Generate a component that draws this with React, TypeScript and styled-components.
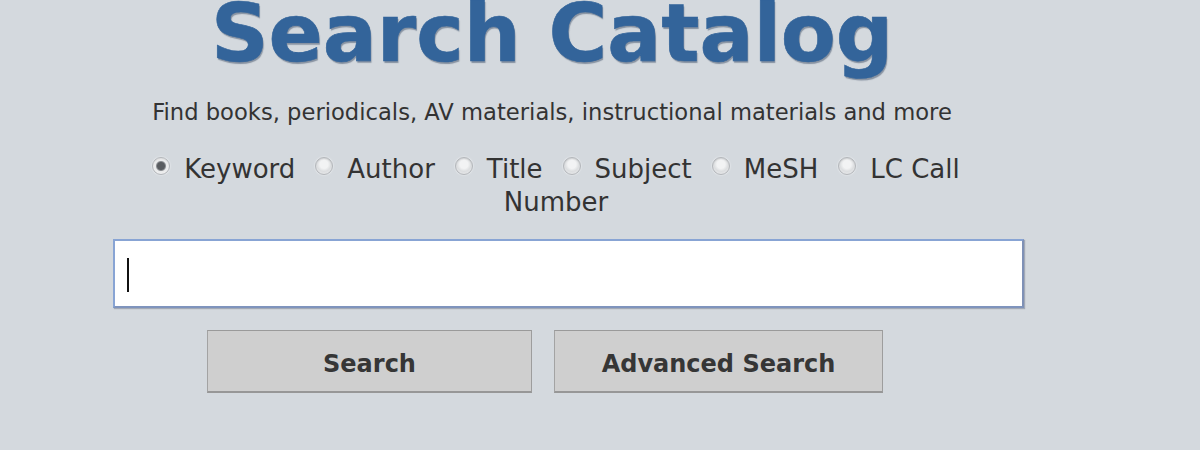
import styled, { createGlobalStyle } from "styled-components";

const GlobalStyle = createGlobalStyle`
  html, body {
    margin: 0;
    padding: 0;
    background: #d4d9de;
  }
  body {
    font-family: "DejaVu Sans", Verdana, sans-serif;
    color: #333;
    overflow: hidden;
  }
`;

const options = ["Keyword", "Author", "Title", "Subject", "MeSH", "LC Call Number"];

const App = () => {
  return (
    <>
      <GlobalStyle />
      <Page>
        <Column>
          <Title>Search Catalog</Title>
          <Subtitle>
            Find books, periodicals, AV materials, instructional materials and
            more
          </Subtitle>

          <RadioGroup>
            {options.map((label, i) => (
              <Option key={label} $first={i === 0}>
                <Radio $checked={i === 0} />
                {label}
              </Option>
            ))}
          </RadioGroup>

          <InputWrap>
            <SearchInput type="text" aria-label="Search terms" />
            <Caret />
          </InputWrap>

          <Buttons>
            <Button $width={325}>Search</Button>
            <Button $width={329}>Advanced Search</Button>
          </Buttons>
        </Column>
      </Page>
    </>
  );
};

export default App;

const Page = styled.main`
  width: 1200px;
  height: 450px;
  padding-left: 113px;
  box-sizing: border-box;
`;

const Column = styled.div`
  width: 911px;
  display: flex;
  flex-direction: column;
`;

const Title = styled.h1`
  margin: -6px 33px 0 0;
  font-family: "DejaVu Sans", Verdana, sans-serif;
  font-weight: bold;
  font-size: 80px;
  line-height: 80px;
  text-align: center;
  color: #33649a;
  text-shadow: 1px 2px 1px rgba(20, 40, 70, 0.4);
  -webkit-text-stroke: 0.6px #33649a;
  white-space: nowrap;
`;

const Subtitle = styled.p`
  margin: 24px 33px 0 0;
  font-size: 22.65px;
  line-height: 28px;
  text-align: center;
  color: #333;
  white-space: nowrap;
`;

const RadioGroup = styled.div`
  width: 850px;
  margin: 27px 0 0 18px;
  font-size: 26px;
  line-height: 33px;
  text-align: center;
  color: #333;
`;

const Option = styled.label<{ $first?: boolean }>`
  margin-left: ${(p) => (p.$first ? "0" : "20px")};
  cursor: pointer;
`;

const Radio = styled.span<{ $checked?: boolean }>`
  display: inline-block;
  width: 18px;
  height: 18px;
  margin-right: 14px;
  vertical-align: 3px;
  box-sizing: border-box;
  border-radius: 50%;
  border: 1px solid #b4b7bb;
  background: ${(p) =>
    p.$checked
      ? "radial-gradient(circle, #5a5d61 0 3.5px, #8a8d91 4.5px, #e9eaeb 5.5px, #f7f7f7 100%)"
      : "radial-gradient(circle at 50% 40%, #f2f3f4 0 4px, #dcdee0 7px, #eeeff0 100%)"};
  box-shadow: 0 0 2px rgba(255, 255, 255, 0.9), inset 0 1px 1px rgba(0, 0, 0, 0.08);
`;

const InputWrap = styled.div`
  position: relative;
  margin-top: 20px;
`;

const SearchInput = styled.input`
  display: block;
  width: 100%;
  height: 69px;
  box-sizing: border-box;
  padding: 0 14px;
  border: 2px solid #88a4d4;
  border-right-color: #7f91b6;
  border-bottom-color: #7f94bd;
  background: #fff;
  font-size: 26px;
  font-family: "DejaVu Sans", Verdana, sans-serif;
  outline: none;
  box-shadow: 1px 1px 1px rgba(70, 80, 110, 0.35);
`;

const Caret = styled.span`
  position: absolute;
  left: 14px;
  top: 19px;
  width: 2px;
  height: 34px;
  background: #111;
`;

const Buttons = styled.div`
  display: flex;
  gap: 22px;
  margin: 22px 0 0 94px;
`;

const Button = styled.button<{ $width: number }>`
  width: ${(p) => p.$width}px;
  height: 63px;
  box-sizing: border-box;
  background: #cfcfcf;
  border: 1px solid #a3a3a3;
  border-top-color: #9a9a9a;
  border-bottom: 2px solid #979797;
  border-right-color: #9d9d9d;
  font-family: "DejaVu Sans", Verdana, sans-serif;
  font-weight: bold;
  font-size: 24px;
  color: #363636;
  cursor: pointer;
  padding: 5px 0 0;
`;
